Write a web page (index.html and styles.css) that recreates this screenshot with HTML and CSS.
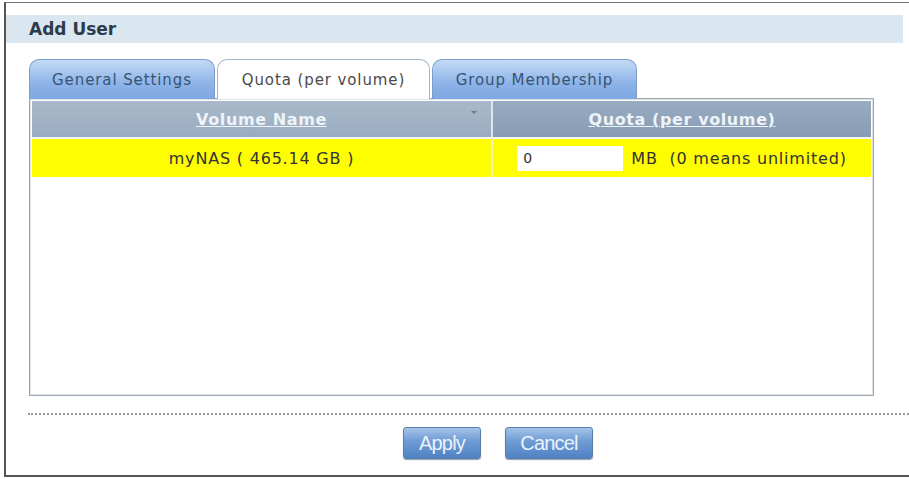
FILE: index.html
```html
<!DOCTYPE html>
<html>
<head>
	<meta charset="utf-8">
	<title>Add User</title>
	<link rel="stylesheet" href="styles.css">
</head>
<body>
	<div class="frame">
		<div class="title">Add User</div>
		<div class="tabs">
			<div class="tab tab1">General Settings</div>
			<div class="tab tab2 active">Quota (per volume)</div>
			<div class="tab tab3">Group Membership</div>
		</div>
		<div class="panel">
			<table class="grid">
				<tr>
					<th class="sorted"><a href="#">Volume Name</a><span class="sort"></span></th>
					<th><a href="#">Quota (per volume)</a></th>
				</tr>
				<tr class="hl">
					<td class="name">myNAS ( 465.14 GB )</td>
					<td class="quota"><input type="text" value="0"><span>MB&nbsp; (0 means unlimited)</span></td>
				</tr>
			</table>
		</div>
		<div class="sep"></div>
		<div class="actions">
			<button class="btn apply">Apply</button>
			<button class="btn cancel">Cancel</button>
		</div>
	</div>
</body>
</html>
```

FILE: styles.css
```css
*{
	padding:0;
	margin:0;
	box-sizing: border-box;
}
body{
	background: #fff;
	font-family: "DejaVu Sans", Verdana, sans-serif;
	color: #333;
}
.frame{
	margin: 2px 0 0 4px;
	height: 475px;
	border-left: 2px solid #555;
	border-top: 1px solid #777;
	border-bottom: 2px solid #555;
}
.title{
	margin: 12px 6px 0 0;
	height: 28px;
	line-height: 28px;
	padding-left: 23px;
	background: #dae6f0;
	color: #2c3b4b;
	font-weight: bold;
	font-size: 17px;
}
.tabs{
	display: flex;
	gap: 2px;
	margin: 16px 0 0 23px;
	height: 40px;
	position: relative;
	z-index: 2;
}
.tab{
	height: 40px;
	border: 1px solid #7d9dc8;
	border-bottom: none;
	border-radius: 10px 10px 0 0;
	background: linear-gradient(#c4daf6, #8db3e8 60%, #7ea8e2);
	color: #355575;
	font-size: 15px;
	letter-spacing: 0.9px;
	display: flex;
	align-items: center;
	justify-content: center;
}
.tab1{ width: 186px; }
.tab2{ width: 213px; }
.tab3{ width: 205px; }
.tab.active{
	background: #fff;
	border-color: #a6b5c6;
	color: #4a4a4a;
}
.panel{
	margin: -1px 0 0 23px;
	width: 845px;
	height: 298px;
	border: 1px solid #9ea7b1;
	box-shadow: inset 0 0 0 1px #dde2e7;
	padding: 2px;
	background: #fff;
}
.grid{
	width: 100%;
	border-collapse: separate;
	border-spacing: 0;
}
.grid th{
	height: 36px;
	background: linear-gradient(#97abc1, #889db5);
	position: relative;
	font-size: 16px;
	letter-spacing: 0.6px;
}
.grid th.sorted{
	width: 461px;
	background: linear-gradient(#a9b9cb, #9aacc0);
	border-right: 2px solid #dfe6ee;
}
.grid th a{
	color: #eef3f8;
	text-decoration: underline;
}
.sort{
	position: absolute;
	right: 14px;
	top: 10px;
	border-left: 3px solid transparent;
	border-right: 3px solid transparent;
	border-top: 3px solid #6c7c8d;
}
.grid td{
	height: 40px;
	border-top: 2px solid #f2f5f8;
	background: #fefd02;
	font-size: 16px;
	letter-spacing: 0.8px;
	color: #333;
}
.grid td.name{
	text-align: center;
	border-right: 2px solid #f4f4b0;
}
.grid td.quota{
	text-align: center;
}
.quota input{
	width: 106px;
	height: 25px;
	border: none;
	background: #fff;
	padding-left: 6px;
	font-family: "DejaVu Sans", Verdana, sans-serif;
	font-size: 14px;
	color: #333;
	vertical-align: middle;
	margin-right: 8px;
}
.quota span{
	vertical-align: middle;
}
.sep{
	margin: 17px 0 0 22px;
	border-top: 2px dotted #9a9a9a;
}
.actions{
	display: flex;
	gap: 24px;
	margin-top: 12px;
	padding-left: 397px;
}
.btn{
	height: 32px;
	border: 1px solid #5b7fab;
	border-radius: 3px;
	background: linear-gradient(#a4c2e8, #6e9bd4 45%, #4f82c4);
	color: #eaf2fb;
	font-family: "Liberation Sans", Arial, sans-serif;
	font-size: 20px;
	letter-spacing: -0.8px;
	box-shadow: 0 1px 1px #8aa0b8;
}
.apply{ width: 78px; }
.cancel{ width: 88px; }
```
